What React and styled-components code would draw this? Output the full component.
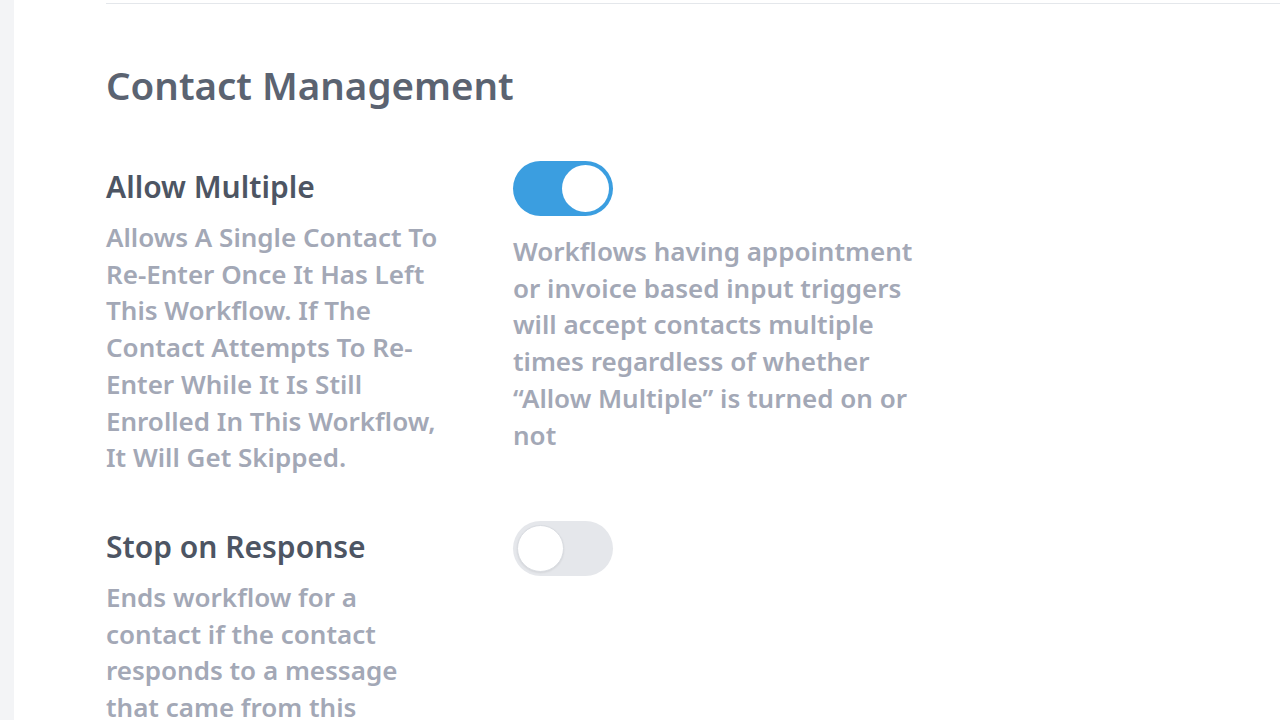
import React, { useState } from "react";
import styled, { createGlobalStyle } from "styled-components";

const GlobalStyle = createGlobalStyle`
  html, body {
    margin: 0;
    padding: 0;
    background: #ffffff;
    font-family: "Noto Sans", "Open Sans", sans-serif;
  }
`;

const Page = styled.div`
  display: flex;
  min-height: 720px;
  overflow: hidden;
`;

const SideStrip = styled.aside`
  width: 14px;
  flex-shrink: 0;
  background-color: #f3f4f6;
`;

const Content = styled.main`
  flex: 1;
  padding-left: 92px;
  padding-top: 3px;
`;

const Section = styled.section`
  border-top: 1px solid #e4e7eb;
  padding-top: 57px;
`;

const Title = styled.h2`
  margin: 0;
  font-size: 38.5px;
  line-height: 48px;
  font-weight: 600;
  color: #5b6371;
`;

const SettingRow = styled.div`
  display: grid;
  grid-template-columns: 345px 405px;
  column-gap: 62px;
  align-items: start;
  margin-top: ${(p) => p.$top}px;
`;

const Info = styled.div`
  padding-top: 8px;
`;

const Label = styled.h3`
  margin: 0 0 14px;
  font-size: 30px;
  line-height: 36px;
  font-weight: 600;
  color: #4d5563;
`;

const Description = styled.p`
  margin: 0;
  font-size: 26px;
  line-height: 36.7px;
  font-weight: 600;
  color: #a3a8b6;
`;

const Control = styled.div`
  display: flex;
  flex-direction: column;
  gap: 17px;
`;

const Switch = styled.button`
  position: relative;
  width: 100px;
  height: 55px;
  padding: 0;
  border: none;
  border-radius: 28px;
  cursor: pointer;
  background-color: ${(p) => (p.$on ? "#3b9ee0" : "#e5e7eb")};

  &::after {
    content: "";
    position: absolute;
    top: 4px;
    left: ${(p) => (p.$on ? "49px" : "4px")};
    width: 47px;
    height: 47px;
    border-radius: 50%;
    background: #ffffff;
    box-sizing: border-box;
    border: ${(p) => (p.$on ? "none" : "1px solid #d9dce1")};
    box-shadow: ${(p) => (p.$on ? "none" : "0 1px 2px rgba(0,0,0,0.08)")};
  }
`;

const Note = styled.p`
  margin: 0;
  font-size: 26px;
  line-height: 36.7px;
  font-weight: 600;
  color: #a3a8b6;
`;

const App = () => {
  const [allowMultiple, setAllowMultiple] = useState(true);
  const [stopOnResponse, setStopOnResponse] = useState(false);

  return (
    <Page>
      <GlobalStyle />
      <SideStrip />
      <Content>
        <Section>
          <Title>Contact Management</Title>

          <SettingRow $top={52}>
            <Info>
              <Label>Allow Multiple</Label>
              <Description>
                Allows A Single Contact To Re-Enter Once It Has Left This
                Workflow. If The Contact Attempts To Re-Enter While It Is Still
                Enrolled In This Workflow, It Will Get Skipped.
              </Description>
            </Info>
            <Control>
              <Switch
                $on={allowMultiple}
                onClick={() => setAllowMultiple(!allowMultiple)}
              />
              <Note>
                Workflows having appointment or invoice based input triggers
                will accept contacts multiple times regardless of whether
                “Allow Multiple” is turned on or not
              </Note>
            </Control>
          </SettingRow>

          <SettingRow $top={45}>
            <Info>
              <Label>Stop on Response</Label>
              <Description>
                Ends workflow for a contact if the contact responds to a
                message that came from this workflow.
              </Description>
            </Info>
            <Control>
              <Switch
                $on={stopOnResponse}
                onClick={() => setStopOnResponse(!stopOnResponse)}
              />
            </Control>
          </SettingRow>
        </Section>
      </Content>
    </Page>
  );
};

export default App;
